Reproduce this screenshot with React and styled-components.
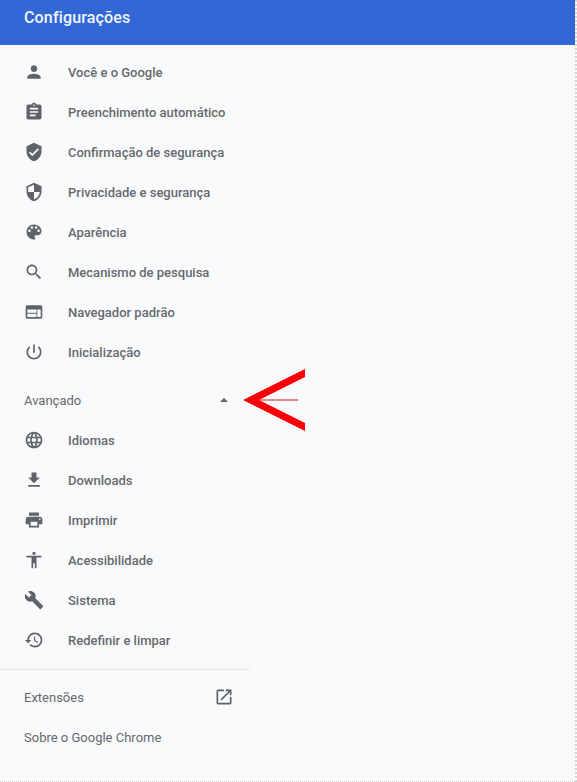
import React from "react";
import styled, { createGlobalStyle } from "styled-components";

const GlobalStyle = createGlobalStyle`
  html, body {
    margin: 0;
    padding: 0;
    background: #fff;
  }
  body {
    font-family: Roboto, "Liberation Sans", sans-serif;
  }
`;

const Page = styled.div`
  position: relative;
  box-sizing: border-box;
  width: 577px;
  height: 782px;
  overflow: hidden;
  background: #f9fafc;
  border-right: 2px dotted #d4d5d6;
  border-bottom: 1px dotted #d4d5d6;
`;

const Header = styled.header`
  height: 45px;
  box-sizing: border-box;
  padding: 9px 24px 0;
  background: #3367d6;
  color: #f1f5fd;
  font-size: 16px;
  font-weight: 500;
  line-height: 18px;
  letter-spacing: 0.15px;
`;

const Nav = styled.nav`
  width: 250px;
  padding-top: 7px;
`;

const Row = styled.div`
  display: flex;
  align-items: center;
  height: 40px;
  padding: 0 24px;
  color: #66696d;
  font-size: 13px;
  font-weight: 500;
`;

const PlainRow = styled(Row)`
  justify-content: space-between;
  font-weight: 400;
`;

const Section = styled(PlainRow)`
  margin-top: 8px;
`;

const Label = styled.span`
  margin-left: 24px;
`;

const Icon = styled.svg`
  flex: none;
  width: 20px;
  height: 20px;
  fill: #5f6368;
`;

const Caret = styled.svg`
  flex: none;
  width: 8px;
  height: 4px;
  margin-right: -2px;
  fill: #5f6368;
`;

const LinkIcon = styled.svg`
  flex: none;
  width: 20px;
  height: 20px;
  margin-right: -8px;
  fill: #5f6368;
`;

const Divider = styled.hr`
  height: 1px;
  margin: 9px 0 7px;
  border: 0;
  background: #e3e5e8;
`;

const Pointer = styled.svg`
  position: absolute;
  left: 240px;
  top: 366px;
  width: 68px;
  height: 68px;
`;

const mainItems = [
  ["Você e o Google", "M12 12c2.21 0 4-1.79 4-4s-1.79-4-4-4-4 1.79-4 4 1.79 4 4 4zm0 2c-2.67 0-8 1.34-8 4v2h16v-2c0-2.66-5.33-4-8-4z"],
  ["Preenchimento automático", "M19 3h-4.18C14.4 1.84 13.3 1 12 1c-1.3 0-2.4.84-2.82 2H5c-1.1 0-2 .9-2 2v14c0 1.1.9 2 2 2h14c1.1 0 2-.9 2-2V5c0-1.1-.9-2-2-2zm-7 0c.55 0 1 .45 1 1s-.45 1-1 1-1-.45-1-1 .45-1 1-1zm2 14H7v-2h7v2zm3-4H7v-2h10v2zm0-4H7V7h10v2z"],
  ["Confirmação de segurança", "M12 1L3 5v6c0 5.55 3.84 10.74 9 12 5.16-1.26 9-6.45 9-12V5l-9-4zm-2 16l-4-4 1.41-1.41L10 14.17l6.59-6.59L18 9l-8 8z"],
  ["Privacidade e segurança", "M12 1L3 5v6c0 5.55 3.84 10.74 9 12 5.16-1.26 9-6.45 9-12V5l-9-4zm0 10.99h7c-.53 4.12-3.28 7.79-7 8.94V12H5V6.3l7-3.11v8.8z"],
  ["Aparência", "M12 3c-4.97 0-9 4.03-9 9s4.03 9 9 9c.83 0 1.5-.67 1.5-1.5 0-.39-.15-.74-.39-1.01-.23-.26-.38-.61-.38-.99 0-.83.67-1.5 1.5-1.5H16c2.76 0 5-2.24 5-5 0-4.42-4.03-8-9-8zm-5.5 9c-.83 0-1.5-.67-1.5-1.5S5.67 9 6.5 9 8 9.67 8 10.5 7.33 12 6.5 12zm3-4C8.67 8 8 7.33 8 6.5S8.67 5 9.5 5s1.5.67 1.5 1.5S10.33 8 9.5 8zm5 0c-.83 0-1.5-.67-1.5-1.5S13.67 5 14.5 5s1.5.67 1.5 1.5S15.33 8 14.5 8zm3 4c-.83 0-1.5-.67-1.5-1.5S16.67 9 17.5 9s1.5.67 1.5 1.5-.67 1.5-1.5 1.5z"],
  ["Mecanismo de pesquisa", "M15.5 14h-.79l-.28-.27C15.41 12.59 16 11.11 16 9.5 16 5.91 13.09 3 9.5 3S3 5.91 3 9.5 5.91 16 9.5 16c1.61 0 3.09-.59 4.23-1.57l.27.28v.79l5 4.99L20.49 19l-4.99-5zm-6 0C7.01 14 5 11.99 5 9.5S7.01 5 9.5 5 14 7.01 14 9.5 11.99 14 9.5 14z"],
  ["Navegador padrão", "M20 4H4c-1.1 0-1.99.9-1.99 2L2 18c0 1.1.9 2 2 2h16c1.1 0 2-.9 2-2V6c0-1.1-.9-2-2-2zm-5 14H4v-4h11v4zm0-5H4V9h11v4zm5 5h-4V9h4v9z"],
  ["Inicialização", "M13 3h-2v10h2V3zm4.83 2.17l-1.42 1.42C17.99 7.86 19 9.81 19 12c0 3.87-3.13 7-7 7s-7-3.13-7-7c0-2.19 1.01-4.14 2.58-5.42L6.17 5.17C4.23 6.82 3 9.26 3 12c0 4.97 4.03 9 9 9s9-4.03 9-9c0-2.74-1.23-5.18-3.17-6.83z"],
];

const advancedItems = [
  ["Idiomas", "M11.99 2C6.47 2 2 6.48 2 12s4.47 10 9.99 10C17.52 22 22 17.52 22 12S17.52 2 11.99 2zm6.93 6h-2.95c-.32-1.25-.78-2.45-1.38-3.56 1.84.63 3.37 1.91 4.33 3.56zM12 4.04c.83 1.2 1.48 2.53 1.91 3.96h-3.82c.43-1.43 1.08-2.76 1.91-3.96zM4.26 14C4.1 13.36 4 12.69 4 12s.1-1.36.26-2h3.38c-.08.66-.14 1.32-.14 2 0 .68.06 1.34.14 2H4.26zm.82 2h2.95c.32 1.25.78 2.45 1.38 3.56-1.84-.63-3.37-1.9-4.33-3.56zm2.95-8H5.08c.96-1.66 2.49-2.93 4.33-3.56C8.81 5.55 8.35 6.75 8.03 8zM12 19.96c-.83-1.2-1.48-2.53-1.91-3.96h3.82c-.43 1.43-1.08 2.76-1.91 3.96zM14.34 14H9.66c-.09-.66-.16-1.32-.16-2 0-.68.07-1.35.16-2h4.68c.09.65.16 1.32.16 2 0 .68-.07 1.34-.16 2zm.25 5.56c.6-1.11 1.06-2.31 1.38-3.56h2.95c-.96 1.65-2.49 2.93-4.33 3.56zM16.36 14c.08-.66.14-1.32.14-2 0-.68-.06-1.34-.14-2h3.38c.16.64.26 1.31.26 2s-.1 1.36-.26 2h-3.38z"],
  ["Downloads", "M19 9h-4V3H9v6H5l7 7 7-7zM5 18v2h14v-2H5z"],
  ["Imprimir", "M19 8H5c-1.66 0-3 1.34-3 3v6h4v4h12v-4h4v-6c0-1.66-1.34-3-3-3zm-3 11H8v-5h8v5zm3-7c-.55 0-1-.45-1-1s.45-1 1-1 1 .45 1 1-.45 1-1 1zm-1-9H6v4h12V3z"],
  ["Acessibilidade", "M12 2c1.1 0 2 .9 2 2s-.9 2-2 2-2-.9-2-2 .9-2 2-2zm9 7h-6v13h-2v-6h-2v6H9V9H3V7h18v2z"],
  ["Sistema", "M22.7 19l-9.1-9.1c.9-2.3.4-5-1.5-6.9-2-2-5-2.4-7.4-1.3L9 6 6 9 1.6 4.7C.4 7.1.9 10.1 2.9 12.1c1.9 1.9 4.6 2.4 6.9 1.5l9.1 9.1c.4.4 1 .4 1.4 0l2.3-2.3c.5-.4.5-1.1.1-1.4z"],
  ["Redefinir e limpar", "M13 3c-4.97 0-9 4.03-9 9H1l3.89 3.89.07.14L9 12H6c0-3.87 3.13-7 7-7s7 3.13 7 7-3.13 7-7 7c-1.93 0-3.68-.79-4.94-2.06l-1.42 1.42C8.27 19.99 10.51 21 13 21c4.97 0 9-4.03 9-9s-4.03-9-9-9zm-1 5v5l4.28 2.54.72-1.21-3.5-2.08V8H12z"],
];

const MenuItem = ({ label, path }) => (
  <Row>
    <Icon viewBox="0 0 24 24">
      <path d={path} />
    </Icon>
    <Label>{label}</Label>
  </Row>
);

const App = () => {
  return (
    <Page>
      <GlobalStyle />
      <Header>Configurações</Header>
      <Nav>
        {mainItems.map(([label, path]) => (
          <MenuItem key={label} label={label} path={path} />
        ))}
        <Section>
          Avançado
          <Caret viewBox="0 0 8 4">
            <path d="M0 4l4-4 4 4z" />
          </Caret>
        </Section>
        {advancedItems.map(([label, path]) => (
          <MenuItem key={label} label={label} path={path} />
        ))}
        <Divider />
        <PlainRow>
          Extensões
          <LinkIcon viewBox="0 0 24 24">
            <path d="M19 19H5V5h7V3H5c-1.11 0-2 .9-2 2v14c0 1.1.89 2 2 2h14c1.1 0 2-.9 2-2v-7h-2v7zM14 3v2h3.59l-9.83 9.83 1.41 1.41L19 6.41V10h2V3h-7z" />
          </LinkIcon>
        </PlainRow>
        <PlainRow>Sobre o Google Chrome</PlainRow>
      </Nav>
      <Pointer viewBox="0 0 68 68">
        <path d="M3 34L65 3v8L19 34l46 23v8z" fill="#fb0007" />
        <path d="M10 33.5h48v1H10z" fill="#d8141b" />
      </Pointer>
    </Page>
  );
};

export default App;
